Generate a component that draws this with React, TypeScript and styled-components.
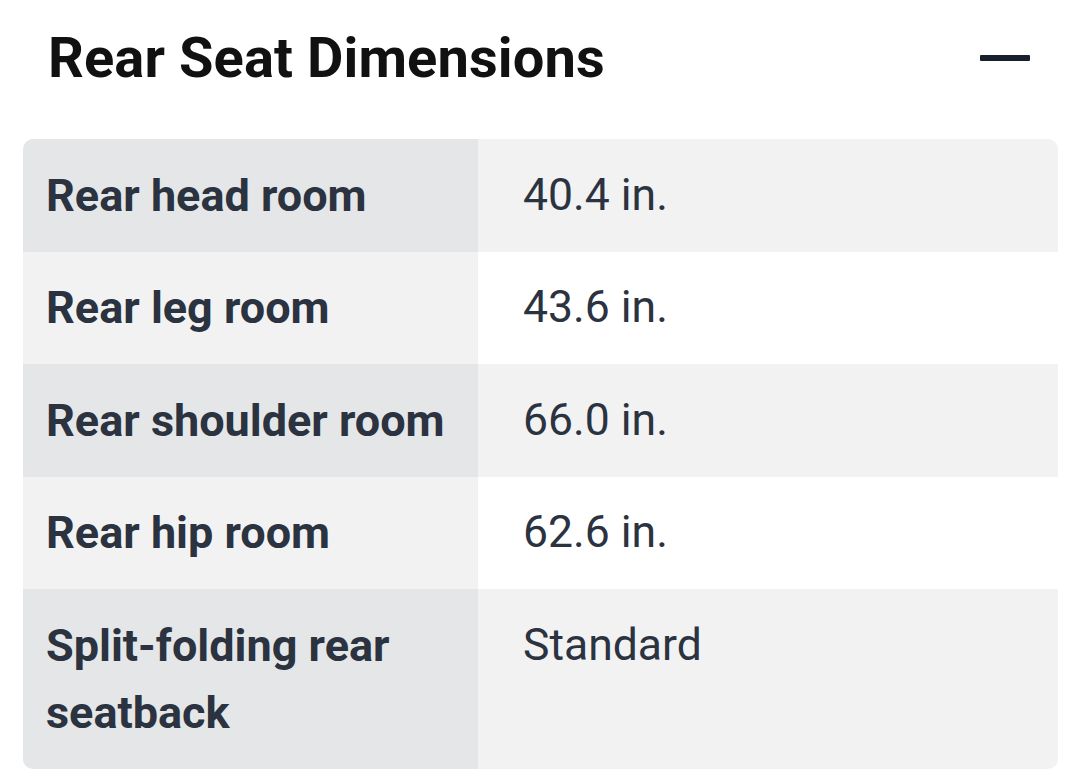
import React from "react";
import styled, { createGlobalStyle } from "styled-components";

const Global = createGlobalStyle`
  html, body { margin: 0; padding: 0; background: #ffffff; }
  body { font-family: Roboto, "Liberation Sans", Arial, sans-serif; }
`;

const Page = styled.div`
  width: 1080px;
  box-sizing: border-box;
  padding: 0 22px 0 23px;
`;

const Header = styled.div`
  display: flex;
  align-items: center;
  justify-content: space-between;
  height: 139px;
  padding: 0 28px 24px 25px;
  box-sizing: border-box;
`;

const Title = styled.h2`
  margin: 0;
  font-family: Roboto, "Liberation Sans", Arial, sans-serif;
  font-weight: 700;
  font-size: 56px;
  letter-spacing: 0.1px;
  color: #111111;
`;

const Minus = styled.span`
  display: block;
  width: 50px;
  height: 6px;
  background: #17202b;
  border-radius: 1px;
`;

const Table = styled.div`
  display: grid;
  grid-template-columns: 455px 1fr;
  border-radius: 10px;
  overflow: hidden;
`;

const Label = styled.div<{ $odd: boolean }>`
  background: ${(p) => (p.$odd ? "#e5e6e7" : "#f2f2f3")};
  padding: 22.5px 20px 22.5px 23px;
  font-weight: 700;
  font-size: 45px;
  line-height: 67.5px;
  color: #2b3240;
`;

const Value = styled.div<{ $odd: boolean }>`
  background: ${(p) => (p.$odd ? "#f2f2f3" : "#ffffff")};
  padding: 22.5px 20px 22.5px 45px;
  font-weight: 400;
  font-size: 44.5px;
  line-height: 67.5px;
  color: #2b3240;
`;

const rows = [
  ["Rear head room", "40.4 in."],
  ["Rear leg room", "43.6 in."],
  ["Rear shoulder room", "66.0 in."],
  ["Rear hip room", "62.6 in."],
  ["Split-folding rear seatback", "Standard"],
];

export default function App() {
  return (
    <>
      <Global />
      <Page>
        <Header>
          <Title>Rear Seat Dimensions</Title>
          <Minus />
        </Header>
        <Table>
          {rows.map(([l, v], i) => (
            <React.Fragment key={l}>
              <Label $odd={i % 2 === 0}>{l}</Label>
              <Value $odd={i % 2 === 0}>{v}</Value>
            </React.Fragment>
          ))}
        </Table>
      </Page>
    </>
  );
}
